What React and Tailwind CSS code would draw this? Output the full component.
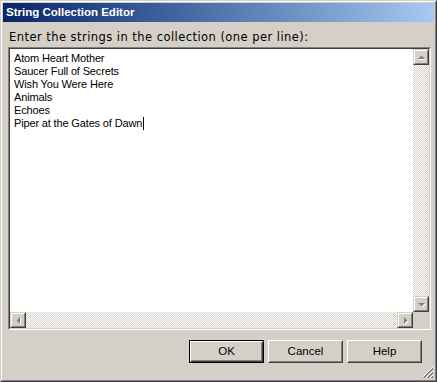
import React from "react";

const font = { fontFamily: '"Liberation Sans", Arial, sans-serif' };

function Arrow({ dir }) {
  const pts = {
    up: "1,5 8,5 4.5,1.5",
    down: "1,2 8,2 4.5,5.5",
    left: "5,1 5,8 1.5,4.5",
    right: "2,1 2,8 5.5,4.5",
  }[dir];
  const w = dir === "up" || dir === "down" ? 9 : 7;
  const h = dir === "up" || dir === "down" ? 7 : 9;
  return (
    <svg width={w} height={h} viewBox={`0 0 ${w} ${h}`}>
      <polygon points={pts} fill="#fff" transform="translate(1,1)" />
      <polygon points={pts} fill="#808080" />
    </svg>
  );
}

function ScrollBtn({ dir }) {
  return (
    <div className="w-4 h-4 border border-t-[#d4d0c8] border-l-[#d4d0c8] border-r-[#404040] border-b-[#404040] bg-[#d4d0c8]">
      <div className="w-full h-full border border-t-white border-l-white border-r-[#808080] border-b-[#808080] flex items-center justify-center">
        <Arrow dir={dir} />
      </div>
    </div>
  );
}

function Button({ label, isDefault }) {
  return (
    <div className={`w-[75px] h-[23px] ${isDefault ? "border border-black" : ""}`}>
      <div className="w-full h-full border border-t-white border-l-white border-r-[#404040] border-b-[#404040] bg-[#d4d0c8]">
        <div className="w-full h-full border border-t-[#d4d0c8] border-l-[#d4d0c8] border-r-[#808080] border-b-[#808080] flex items-center justify-center text-[11.5px] text-black">
          {label}
        </div>
      </div>
    </div>
  );
}

const lines = [
  "Atom Heart Mother",
  "Saucer Full of Secrets",
  "Wish You Were Here",
  "Animals",
  "Echoes",
  "Piper at the Gates of Dawn",
];

const track =
  "bg-[repeating-conic-gradient(#d4d0c8_0_25%,#ffffff_0_50%)] bg-[length:2px_2px]";

export default function App() {
  return (
    <div style={font} className="w-[437px] h-[382px] bg-[#d4d0c8] border border-t-[#d4d0c8] border-l-[#d4d0c8] border-r-[#404040] border-b-[#404040]">
      <div className="w-full h-full border border-t-white border-l-white border-r-[#808080] border-b-[#808080] p-px flex flex-col">
        {/* Title bar */}
        <div className="h-[19px] shrink-0 bg-gradient-to-r from-[#0a246a] to-[#a6caf0] flex items-center pl-[3px]">
          <span className="text-white font-bold text-[11.5px] leading-none">String Collection Editor</span>
        </div>

        <div className="flex-1 flex flex-col px-[5px] relative">
          <div className="font-['DejaVu_Sans'] text-[11.5px] leading-[13px] tracking-[0.45px] text-black mt-[9px] ml-px">
            Enter the strings in the collection (one per line):
          </div>

          {/* Text area */}
          <div className="mt-[3px] h-[283px] w-[423px] border border-t-[#808080] border-l-[#808080] border-r-white border-b-white">
            <div className="w-full h-full border border-t-[#404040] border-l-[#404040] border-r-[#d4d0c8] border-b-[#d4d0c8] grid grid-cols-[1fr_16px] grid-rows-[1fr_16px] bg-white">
              <div className="pl-1 pt-[3px] text-[11px] leading-[13px] tracking-[-0.15px] text-black">
                {lines.map((l, i) => (
                  <div key={i} className="flex items-center">
                    <span>{l}</span>
                    {i === lines.length - 1 && <span className="inline-block w-px h-[13px] bg-black ml-px" />}
                  </div>
                ))}
              </div>
              <div className={`flex flex-col justify-between ${track}`}>
                <ScrollBtn dir="up" />
                <ScrollBtn dir="down" />
              </div>
              <div className={`flex justify-between ${track}`}>
                <ScrollBtn dir="left" />
                <ScrollBtn dir="right" />
              </div>
              <div className="bg-[#d4d0c8]" />
            </div>
          </div>

          {/* Buttons */}
          <div className="flex justify-end gap-1 mt-[10px] pr-[7px]">
            <Button label="OK" isDefault />
            <Button label="Cancel" />
            <Button label="Help" />
          </div>

          {/* Resize grip */}
          <svg className="absolute right-0 bottom-0" width="13" height="13" viewBox="0 0 13 13">
            {[0, 4, 8].map((o) => (
              <g key={o}>
                <line x1={12} y1={1 + o} x2={1 + o} y2={12} stroke="#fff" strokeWidth="1" />
                <line x1={12} y1={2 + o} x2={2 + o} y2={12} stroke="#808080" strokeWidth="1" />
                <line x1={12} y1={3 + o} x2={3 + o} y2={12} stroke="#808080" strokeWidth="1" />
              </g>
            ))}
          </svg>
        </div>
      </div>
    </div>
  );
}
